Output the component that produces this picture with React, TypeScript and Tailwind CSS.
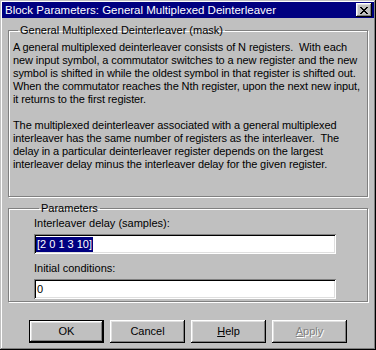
import React from 'react'

const raised = 'shadow-[inset_-1px_-1px_#000,inset_1px_1px_#fff,inset_-2px_-2px_#808080,inset_2px_2px_#dfdfdf]'
const sunken = 'shadow-[inset_1px_1px_#808080,inset_-1px_-1px_#fff,inset_2px_2px_#000,inset_-2px_-2px_#dfdfdf]'

function Group({ label, className, children }: { label: string; className: string; children: React.ReactNode }) {
  return (
    <fieldset className={`border border-[#808080] shadow-[inset_1px_1px_#fff,1px_1px_#fff] ${className}`}>
      <legend className="ml-[5px] px-[2px] leading-[13px] text-black">{label}</legend>
      {children}
    </fieldset>
  )
}

export default function App() {
  return (
    <div className="w-[376px] h-[350px] bg-[#c0c0c0] p-[2px] font-['Liberation_Sans',Arial,sans-serif] text-[11px] text-black shadow-[inset_-1px_-1px_#000,inset_1px_1px_#c0c0c0,inset_-2px_-2px_#808080,inset_2px_2px_#fff] flex flex-col">
      {/* title bar */}
      <div className="h-[16px] bg-[#000080] flex items-center justify-between pl-[3px] pr-[2px]">
        <span className="text-white font-['Liberation_Sans_Narrow','Liberation_Sans',sans-serif] text-[11.5px] leading-[16px]">Block Parameters: General Multiplexed Deinterleaver</span>
        <button className={`w-[16px] h-[14px] bg-[#c0c0c0] ${raised} flex items-center justify-center`}>
          <svg width="8" height="7" viewBox="0 0 8 7">
            <path d="M0 0h2v1h1v1h2V1h1V0h2v1H7v1H6v1H5v1h1v1h1v1h1v1H6V6H5V5H3v1H2v1H0V6h1V5h1V4h1V3H2V2H1V1H0z" fill="#000" />
          </svg>
        </button>
      </div>

      <div className="flex flex-col px-[6px]">
        <Group label="General Multiplexed Deinterleaver (mask)" className="mt-[6px] h-[173px] pl-[4px] pr-0">
          <div className="leading-[13px] mt-[4px] tracking-[-0.1px]">
            <p>A general multiplexed deinterleaver consists of N registers.&nbsp; With each new input symbol, a commutator switches to a new register and the new symbol is shifted in while the oldest symbol in that register is shifted out. When the commutator reaches the Nth register, upon the next new input, it returns to the first register.</p>
            <p className="mt-[13px]">The multiplexed deinterleaver associated with a general multiplexed interleaver has the same number of registers as the interleaver.&nbsp; The delay in a particular deinterleaver register depends on the largest interleaver delay minus the interleaver delay for the given register.</p>
          </div>
        </Group>

        <Group label="Parameters" className="mt-[5px] h-[100px] pl-[25px]">
          <div className="flex flex-col w-[302px] mt-[2px]">
            <span className="leading-[13px]">Interleaver delay (samples):</span>
            <div className={`mt-[4px] h-[20px] bg-white ${sunken} flex items-center pl-[2px]`}>
              <span className="bg-[#000080] text-white leading-[15px] px-[1px]">[2 0 1 3 10]</span>
            </div>
            <span className="mt-[8px] leading-[13px]">Initial conditions:</span>
            <div className={`mt-[4px] h-[20px] bg-white ${sunken} flex items-center pl-[3px]`}>
              <span className="leading-[15px]">0</span>
            </div>
          </div>
        </Group>
      </div>

      <div className="flex gap-[6px] pl-[27px] mt-[18px]">
        <div className="border border-black">
          <button className={`w-[73px] h-[21px] bg-[#c0c0c0] ${raised}`}>OK</button>
        </div>
        <button className={`w-[75px] h-[23px] bg-[#c0c0c0] ${raised}`}>Cancel</button>
        <button className={`w-[75px] h-[23px] bg-[#c0c0c0] ${raised}`}>
          <span className="underline">H</span>elp
        </button>
        <button className={`w-[75px] h-[23px] bg-[#c0c0c0] ${raised} text-[#808080] [text-shadow:1px_1px_#fff]`}>
          <span className="underline">A</span>pply
        </button>
      </div>
    </div>
  )
}
